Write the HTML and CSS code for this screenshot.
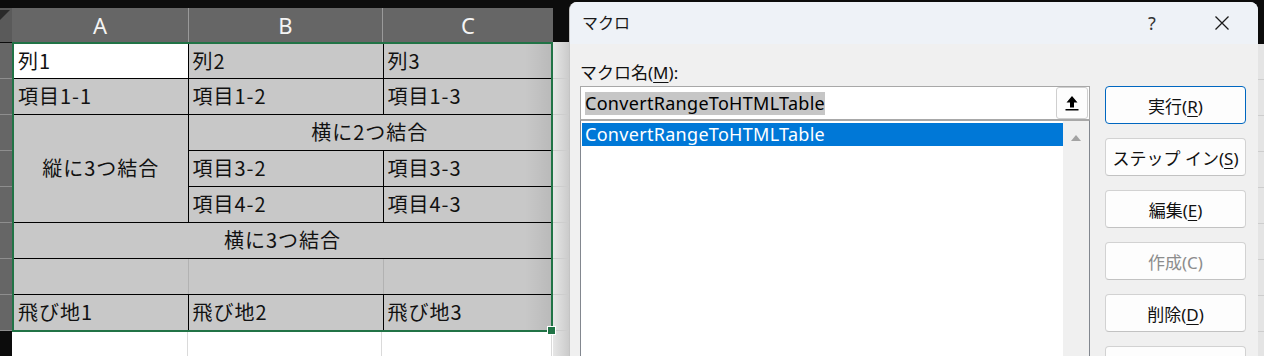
FILE: index.html
```html
<!DOCTYPE html>
<html lang="ja">
<head>
  <meta charset="UTF-8">
  <meta name="viewport" content="width=device-width, initial-scale=1.0">
  <title>マクロ</title>
  <link rel="stylesheet" href="styles.css">
</head>
<body>
  <div class="sheet">
    <div class="sheet-top"></div>
    <div class="col-heads">
      <div class="corner"><span class="corner-tri"></span></div>
      <div class="col-head col-a">A</div>
      <div class="col-head col-b">B</div>
      <div class="col-head col-c">C</div>
      <div class="col-fill"></div>
    </div>
    <div class="sheet-body">
      <div class="row-heads">
        <div class="row-head"></div><div class="row-head"></div><div class="row-head"></div><div class="row-head"></div>
        <div class="row-head"></div><div class="row-head"></div><div class="row-head"></div><div class="row-head"></div>
      </div>
      <div class="grid">
        <div class="sel">
          <table class="cells">
            <colgroup><col class="w-a"><col class="w-b"><col class="w-c"></colgroup>
            <tr class="first"><td class="active">列1</td><td>列2</td><td>列3</td></tr>
            <tr><td>項目1-1</td><td>項目1-2</td><td>項目1-3</td></tr>
            <tr><td rowspan="3" class="center">縦に3つ結合</td><td colspan="2" class="center">横に2つ結合</td></tr>
            <tr><td>項目3-2</td><td>項目3-3</td></tr>
            <tr><td>項目4-2</td><td>項目4-3</td></tr>
            <tr><td colspan="3" class="center">横に3つ結合</td></tr>
            <tr class="blank"><td></td><td></td><td></td></tr>
            <tr><td>飛び地1</td><td>飛び地2</td><td>飛び地3</td></tr>
          </table>
          <div class="shade"></div>
          <div class="handle"></div>
        </div>
        <div class="below">
          <div class="below-a"></div><div class="below-b"></div><div class="below-c"></div>
        </div>
      </div>
      <div class="side"></div>
    </div>
  </div>

  <div class="dialog">
    <div class="title-bar">
      <span class="title">マクロ</span>
      <span class="help">?</span>
      <svg class="close" width="16" height="16" viewBox="0 0 16 16">
        <path d="M1.5 1.5 L14.5 14.5 M14.5 1.5 L1.5 14.5" stroke="#1a1a1a" stroke-width="1.3" fill="none"/>
      </svg>
    </div>
    <div class="dlg-body">
      <div class="dlg-left">
        <div class="label">マクロ名(<u>M</u>):</div>
        <div class="name-box">
          <span class="name-text"><span class="sel-text">ConvertRangeToHTMLTable</span></span>
          <span class="up-btn">
            <svg width="18" height="18" viewBox="0 0 18 18">
              <path d="M9 2 L14.5 8.5 L11 8.5 L11 13.5 L7 13.5 L7 8.5 L3.5 8.5 Z" fill="#000"/>
              <rect x="2.5" y="15" width="13" height="1.5" fill="#000"/>
            </svg>
          </span>
        </div>
        <div class="list">
          <div class="list-items">
            <div class="list-item">ConvertRangeToHTMLTable</div>
          </div>
          <div class="scroll">
            <svg width="12" height="8" viewBox="0 0 12 8"><path d="M6 1 L11 7 L1 7 Z" fill="#a3a3a3"/></svg>
          </div>
        </div>
      </div>
      <div class="dlg-btns">
        <button class="btn default">実行(<u>R</u>)</button>
        <button class="btn">ステップ イン(<u>S</u>)</button>
        <button class="btn">編集(<u>E</u>)</button>
        <button class="btn" disabled>作成(C)</button>
        <button class="btn">削除(<u>D</u>)</button>
        <button class="btn"></button>
      </div>
    </div>
  </div>

  <div class="edge">
    <div class="edge-top"></div>
    <div class="edge-rest"></div>
  </div>
</body>
</html>
```

FILE: styles.css
```css
html,body{ margin:0; padding:0; }
body{
  width:1264px; height:356px; overflow:hidden;
  background:#0c0c0c; display:flex;
  font-family:"Noto Sans","Noto Sans CJK JP",sans-serif;
}

/* ---- sheet ---- */
.sheet{ width:569px; display:flex; flex-direction:column; }
.sheet-top{ height:8px; background:#0c0c0c; }
.col-heads{ height:34px; display:flex; }
.corner{ width:12px; background:#5a5a5a; position:relative; overflow:hidden; }
.corner-tri{
  position:absolute; left:-2px; top:2px; width:0; height:0;
  border-top:12px solid #2a2a2a; border-right:12px solid transparent;
}
.col-head{
  background:#666; color:#f4f4f4; font-size:22px; line-height:34px; text-align:center;
}
.col-a{ width:176px; }
.col-b{ width:193px; border-left:1px solid #9a9a9a; }
.col-c{ width:170px; border-left:1px solid #9a9a9a; }
.col-fill{ width:16px; background:#0c0c0c; }

.sheet-body{ flex:1; display:flex; }
.row-heads{ width:12px; background:#0c0c0c; padding-top:1px; }
.row-head{ height:35px; background:#666; border-bottom:1px solid #8e8e8e; }

.grid{ width:541px; display:flex; flex-direction:column; }
.sel{ border:2px solid #217346; position:relative; background:#c8c8c8; }
.cells{
  border-collapse:collapse; border-style:hidden; table-layout:fixed; width:537px;
  font-family:"Noto Sans CJK JP",sans-serif; font-size:20px; letter-spacing:1px; color:#111;
}
.w-a{ width:174px; } .w-b{ width:195px; } .w-c{ width:168px; }
.cells tr{ height:36px; }
.cells tr.first{ height:34px; }
.cells td{
  border:1px solid #000; padding:0 0 0 4px; background:#c8c8c8;
  white-space:nowrap; vertical-align:middle; line-height:20px;
}
.cells td.active{ background:#fff; }
.cells td.center{ text-align:center; padding:0; }
.cells .blank td{ border-left-color:#b2b2b2; border-right-color:#b2b2b2; }
.shade{
  position:absolute; top:0; right:0; bottom:0; width:26px; pointer-events:none;
  background:linear-gradient(to right, rgba(0,0,0,0), rgba(0,0,0,0.07));
}
.handle{
  position:absolute; right:-5px; bottom:-5px; width:7px; height:7px;
  background:#217346; border:1px solid #fff;
}
.below{ flex:1; display:flex; background:#fff; }
.below-a{ width:175px; border-right:1px solid #dadada; }
.below-b{ width:193px; border-right:1px solid #dadada; }
.below-c{ width:169px; border-right:1px solid #dadada; }

.side{
  width:16px;
  background:
    repeating-linear-gradient(to bottom, transparent 0 35px, #cdcdcd 35px 36px),
    linear-gradient(to right, #e6e6e6, #cbcbcb);
  background-position:0 1px, 0 0;
}

/* ---- dialog ---- */
.dialog{
  width:688px; height:354px; margin-top:2px; background:#f0f0f0;
  border-left:1px solid #c4c4c4; border-radius:8px 8px 0 0; overflow:hidden;
  display:flex; flex-direction:column;
}
.title-bar{
  flex:none; height:42px; background:#eef2f7; display:flex; align-items:center;
  padding-left:12px; color:#1a1a1a;
}
.title{ flex:1; font-family:"Noto Sans CJK JP",sans-serif; font-size:16px; margin-top:-3px; }
.help{ font-size:18px; width:20px; text-align:center; margin-right:52px; color:#333; }
.close{ margin-right:28px; }

.dlg-body{ flex:1; min-height:0; overflow:hidden; display:flex; padding:0 11px 0 10px; gap:15px; }
.dlg-left{ width:510px; display:flex; flex-direction:column; }
.label{ flex:none; margin-top:16px; height:26px; font-size:17px; line-height:26px; color:#111; }
.label u{ text-underline-offset:3px; }
.name-box{
  flex:none; height:32px; border:1px solid #a8a8a8; background:#fff;
  display:flex; align-items:center;
}
.name-text{ flex:1; padding-left:4px; font-size:18px; letter-spacing:0.3px; color:#000; }
.sel-text{ background:#c6c6c6; line-height:23px; display:inline-block; }
.up-btn{
  width:30px; height:30px; margin-right:1px; border:1px solid #cfcfcf; border-radius:3px;
  background:#fdfdfd; display:flex; align-items:center; justify-content:center;
}
.list{
  flex:1; display:flex; background:#fff;
  border:1px solid #82878f; border-top:1px solid #a8a8a8; border-bottom:none;
}
.list-items{ flex:1; padding:2px 0 0 1px; }
.list-item{
  height:23px; line-height:23px; background:#0078d7; color:#fff;
  font-size:18px; letter-spacing:0.3px; padding-left:3px;
}
.scroll{ width:26px; background:#f0f0f0; display:flex; justify-content:center; padding-top:13px; }
.scroll svg{ display:block; }

.dlg-btns{ width:141px; display:flex; flex-direction:column; gap:14px; padding-top:42px; }
.btn{
  height:38px; width:141px; flex:none; margin:0; padding:0;
  background:#fdfdfd; border:1px solid #d2d2d2; border-bottom-color:#c2c2c2; border-radius:4px;
  font-family:"Noto Sans","Noto Sans CJK JP",sans-serif; font-size:17px; color:#111;
}
.btn u{ text-underline-offset:3px; }
.btn.default{ border:1px solid #0067c0; }
.btn:disabled{ color:#8c8c8c; }

.edge{ width:6px; display:flex; flex-direction:column; }
.edge-top{ height:44px; background:#0c0c0c; }
.edge-rest{
  flex:1;
  background:repeating-linear-gradient(to bottom, #e4e4e4 0 35px, #cdcdcd 35px 36px);
}
```
